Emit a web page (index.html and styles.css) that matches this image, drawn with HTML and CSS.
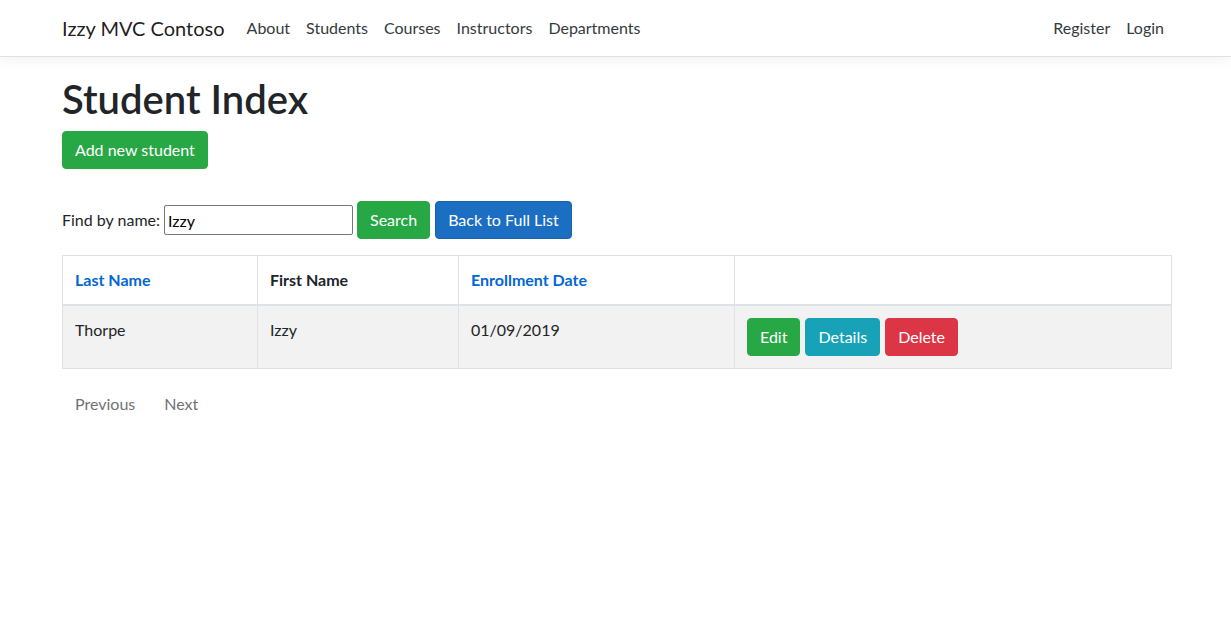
FILE: index.html
```html
<!DOCTYPE html>
<html lang="en">
<head>
<meta charset="utf-8">
<title>Student Index - Izzy MVC Contoso</title>
<link rel="stylesheet" href="styles.css">
</head>
<body>
<header class="navbar">
  <div class="container nav-inner">
    <a class="brand" href="#">Izzy MVC Contoso</a>
    <ul class="nav-list grow">
      <li><a class="nav-link" href="#">About</a></li>
      <li><a class="nav-link" href="#">Students</a></li>
      <li><a class="nav-link" href="#">Courses</a></li>
      <li><a class="nav-link" href="#">Instructors</a></li>
      <li><a class="nav-link" href="#">Departments</a></li>
    </ul>
    <ul class="nav-list">
      <li><a class="nav-link" href="#">Register</a></li>
      <li><a class="nav-link" href="#">Login</a></li>
    </ul>
  </div>
</header>
<main class="container">
  <h1 class="title">Student Index</h1>
  <p class="para"><a class="btn btn-success" href="#">Add new student</a></p>
  <form class="search-form">
    <p class="para search-row">
      <span class="label">Find by name:</span>
      <input class="search-input" type="text" value="Izzy">
      <button class="btn btn-success" type="button">Search</button>
      <a class="btn btn-primary" href="#">Back to Full List</a>
    </p>
  </form>
  <table class="table">
    <thead>
      <tr>
        <th class="c1"><a class="sort-link" href="#">Last Name</a></th>
        <th class="c2">First Name</th>
        <th class="c3"><a class="sort-link" href="#">Enrollment Date</a></th>
        <th class="c4"></th>
      </tr>
    </thead>
    <tbody>
      <tr class="striped">
        <td>Thorpe</td>
        <td>Izzy</td>
        <td>01/09/2019</td>
        <td>
          <div class="actions">
            <a class="btn btn-success" href="#">Edit</a>
            <a class="btn btn-info" href="#">Details</a>
            <a class="btn btn-danger" href="#">Delete</a>
          </div>
        </td>
      </tr>
    </tbody>
  </table>
  <div class="pager">
    <a class="btn btn-default disabled" href="#">Previous</a>
    <a class="btn btn-default disabled" href="#">Next</a>
  </div>
</main>
</body>
</html>
```
FILE: styles.css
```css
* { box-sizing: border-box; }
html, body { margin: 0; padding: 0; }
body {
  font-family: "Lato", "Noto Sans", "Liberation Sans", sans-serif;
  font-size: 16px;
  line-height: 1.5;
  color: #212529;
  background: #fff;
}
a { text-decoration: none; }
.container {
  width: 1110px;
  margin-left: 62px;
}
.navbar {
  background: #fff;
  border-bottom: 1px solid #dee2e6;
  box-shadow: 0 4px 12px rgba(0,0,0,.05);
  padding: 8px 0;
  margin-bottom: 16px;
}
.nav-inner {
  display: flex;
  align-items: center;
}
.brand {
  font-size: 20px;
  line-height: 30px;
  padding: 5px 0;
  margin-right: 14px;
  color: rgba(0,0,0,.9);
}
.nav-list {
  display: flex;
  list-style: none;
  margin: 0;
  padding: 0;
}
.grow { flex: 1; }
.nav-link {
  display: block;
  padding: 8px;
  color: #343a40;
  line-height: 24px;
}
.title {
  font-size: 40px;
  font-weight: 600;
  line-height: 1.2;
  margin: 0 0 8px;
  padding-top: 2px;
}
.para { margin: 0 0 16px; }
.search-form { margin: 0; padding-top: 16px; }
.search-row { display: flex; align-items: center; }
.label { margin-right: 4px; }
.search-input {
  width: 189px;
  height: 30px;
  border: 1px solid #767676;
  border-radius: 2px;
  padding: 1px 3px;
  font-family: inherit;
  font-size: 16px;
  color: #000;
  margin-right: 4px;
}
.search-row .btn + .btn { margin-left: 5px; }
.btn {
  display: inline-block;
  font-family: inherit;
  font-size: 16px;
  line-height: 24px;
  padding: 6px 12px;
  border: 1px solid transparent;
  border-radius: 4px;
  color: #fff;
  cursor: pointer;
  vertical-align: middle;
}
.btn-success { background: #28a745; border-color: #28a745; }
.btn-primary { background: #1b6ec2; border-color: #1861ac; }
.btn-info { background: #17a2b8; border-color: #17a2b8; }
.btn-danger { background: #dc3545; border-color: #dc3545; }
.btn-default { color: #212529; background: transparent; }
.disabled { opacity: .65; }
.table {
  width: 1110px;
  border-collapse: collapse;
  margin-bottom: 16px;
  border: 1px solid #dee2e6;
}
.table th, .table td {
  border: 1px solid #dee2e6;
  padding: 12px;
  text-align: left;
  vertical-align: top;
}
.table thead th {
  border-bottom: 2px solid #dee2e6;
  font-weight: 700;
  height: 49px;
  vertical-align: bottom;
}
.c1 { width: 195px; }
.c2 { width: 201px; }
.c3 { width: 276px; }
.sort-link { color: #0366d6; }
.striped td { background: #f2f2f2; }
.actions { display: flex; gap: 5px; }
.pager { display: flex; gap: 3px; }
```
